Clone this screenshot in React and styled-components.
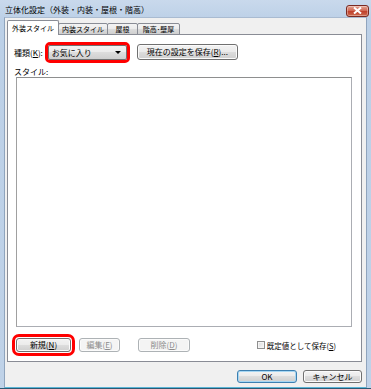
import React from 'react';
import styled, { createGlobalStyle } from 'styled-components';

const GlobalStyle = createGlobalStyle`
  html, body {
    margin: 0;
    padding: 0;
    background: #ffffff;
  }
  body {
    font-family: "Noto Sans CJK JP", "Liberation Sans", sans-serif;
    font-size: 8px;
    color: #000;
  }
`;

const Window = styled.div`
  width: 371px;
  height: 389px;
  box-sizing: border-box;
  display: flex;
  flex-direction: column;
  background: linear-gradient(#c9d9ec, #bcd0e7 20px, #bfd2e8);
  border-bottom: 1px solid #2b5a73;
`;

const TitleBar = styled.div`
  height: 17px;
  display: flex;
  align-items: center;
  justify-content: space-between;
  padding: 0 2px 0 5px;
  flex-shrink: 0;
`;

const Title = styled.span`
  font-size: 8px;
  line-height: 10px;
  color: #000;
  margin-top: 2px;
`;

const CloseButton = styled.div`
  width: 23px;
  height: 12px;
  box-sizing: border-box;
  margin-top: 4px;
  border: 1px solid #7a2a22;
  border-radius: 3px;
  background: linear-gradient(#e5a493, #d16a56 45%, #c0412d 55%, #cc6a4e);
  box-shadow: inset 0 0 0 1px rgba(255, 255, 255, 0.35);
  display: flex;
  align-items: center;
  justify-content: center;
`;

const Client = styled.div`
  flex: 1;
  margin: 0 4px 0 4px;
  background: #f0f0f0;
  border: 1px solid #8fa4bd;
  border-top-color: #a9bbd1;
  border-bottom: 1px solid #5ab4d6;
  display: flex;
  flex-direction: column;
  padding: 2px 4px 0 2px;
`;

const TabStrip = styled.div`
  display: flex;
  align-items: flex-end;
  height: 15px;
  position: relative;
  z-index: 1;
  margin-bottom: -1px;
`;

const Tab = styled.div`
  box-sizing: border-box;
  width: ${p => p.$w}px;
  height: ${p => (p.$active ? '15px' : '12px')};
  margin-left: ${p => (p.$active ? '0' : '-1px')};
  border: 1px solid #898c95;
  border-bottom: ${p => (p.$active ? 'none' : '1px solid #898c95')};
  border-radius: 2px 2px 0 0;
  background: ${p =>
    p.$active ? '#ffffff' : 'linear-gradient(#f3f3f3, #ebebeb 50%, #dddddd 50%, #cfcfcf)'};
  display: flex;
  align-items: center;
  justify-content: center;
  font-size: 7px;
  line-height: 10px;
  white-space: nowrap;
  &:first-child {
    margin-left: 0;
  }
`;

const Panel = styled.div`
  height: 328px;
  box-sizing: border-box;
  background: #ffffff;
  border: 1px solid #898c95;
  padding: 9px 9px 9px 6px;
  display: flex;
  flex-direction: column;
`;

const KindRow = styled.div`
  display: flex;
  align-items: center;
  height: 16px;
`;

const Label = styled.span`
  font-size: 8px;
  line-height: 11px;
  white-space: nowrap;
`;

const Select = styled.div`
  width: 79px;
  height: 15px;
  box-sizing: border-box;
  margin: 0 10px 0 5px;
  border: 1px solid #707070;
  border-radius: 2px;
  background: linear-gradient(#f2f2f2, #ebebeb 50%, #dddddd 50%, #cfcfcf);
  display: flex;
  align-items: center;
  justify-content: space-between;
  padding: 0 5px 0 3px;
  outline: 3px solid #ff0000;
  outline-offset: 0px;
  font-size: 8px;
`;

const Arrow = styled.span`
  width: 0;
  height: 0;
  border-left: 3px solid transparent;
  border-right: 3px solid transparent;
  border-top: 3px solid #000;
`;

const Button = styled.div`
  box-sizing: border-box;
  width: ${p => p.$w}px;
  height: ${p => p.$h || 14}px;
  border: 1px solid ${p => (p.disabled ? '#adb2b5' : p.$default ? '#3c7fb1' : '#707070')};
  border-radius: 3px;
  background: ${p =>
    p.disabled
      ? '#f4f4f4'
      : 'linear-gradient(#f2f2f2, #ebebeb 50%, #dddddd 50%, #cfcfcf)'};
  box-shadow: ${p => (p.$default ? 'inset 0 0 0 1px #a6d6f2' : 'inset 0 0 0 1px #fbfbfb')};
  color: ${p => (p.disabled ? '#8b8b8b' : '#000')};
  display: flex;
  align-items: center;
  justify-content: center;
  font-size: 8px;
  line-height: 10px;
  white-space: nowrap;
  flex-shrink: 0;
  ${p =>
    p.$marked &&
    `
    outline: 3px solid #ff0000;
    outline-offset: 1px;
  `}
`;

const U = styled.span`
  text-decoration: underline;
`;

const StyleLabel = styled(Label)`
  margin-top: 6px;
`;

const ListBox = styled.div`
  height: 250px;
  margin-left: 2px;
  box-sizing: border-box;
  background: #ffffff;
  border: 1px solid #abadb3;
  border-top-color: #8e8f8f;
  border-left-color: #a0a0a0;
`;

const ActionRow = styled.div`
  display: flex;
  align-items: center;
  height: 14px;
  margin-top: 11px;
  padding-left: 2px;
`;

const Gap = styled.div`
  width: ${p => p.$w}px;
  flex-shrink: 0;
`;

const Check = styled.label`
  display: flex;
  align-items: center;
  margin-left: auto;
  margin-right: 16px;
  gap: 2px;
  font-size: 7.5px;
  white-space: nowrap;
`;

const Box = styled.span`
  width: 8px;
  height: 8px;
  box-sizing: border-box;
  border: 1px solid #8f8f8f;
  background: linear-gradient(135deg, #dcdcdc, #f6f6f6);
  box-shadow: inset 0 0 0 1px #f4f4f4;
`;

const Footer = styled.div`
  display: flex;
  justify-content: flex-end;
  gap: 6px;
  margin-top: 8px;
`;

export default function App() {
  return (
    <>
      <GlobalStyle />
      <Window>
        <TitleBar>
          <Title>立体化設定（外装・内装・屋根・階高）</Title>
          <CloseButton>
            <svg width="9" height="7" viewBox="0 0 9 7">
              <path d="M1 0.5 L8 6.5 M8 0.5 L1 6.5" stroke="#ffffff" strokeWidth="2" />
            </svg>
          </CloseButton>
        </TitleBar>
        <Client>
          <TabStrip>
            <Tab $active $w={52}>外装スタイル</Tab>
            <Tab $w={50}>内装スタイル</Tab>
            <Tab $w={31}>屋根</Tab>
            <Tab $w={43}>階高･壁厚</Tab>
          </TabStrip>
          <Panel>
            <KindRow>
              <Label>
                種類(<U>K</U>):
              </Label>
              <Select>
                <span>お気に入り</span>
                <Arrow />
              </Select>
              <Button $w={101} $h={16}>
                現在の設定を保存(<U>R</U>)...
              </Button>
            </KindRow>
            <StyleLabel>スタイル:</StyleLabel>
            <ListBox />
            <ActionRow>
              <Button $w={55} $marked>
                新規(<U>N</U>)
              </Button>
              <Gap $w={8} />
              <Button $w={41} disabled>
                編集(<U>E</U>)
              </Button>
              <Gap $w={18} />
              <Button $w={52} disabled>
                削除(<U>D</U>)
              </Button>
              <Check>
                <Box />
                <span>
                  既定値として保存(<U>S</U>)
                </span>
              </Check>
            </ActionRow>
          </Panel>
          <Footer>
            <Button $w={60} $h={13} $default>
              OK
            </Button>
            <Button $w={59} $h={13}>
              キャンセル
            </Button>
          </Footer>
        </Client>
      </Window>
    </>
  );
}
